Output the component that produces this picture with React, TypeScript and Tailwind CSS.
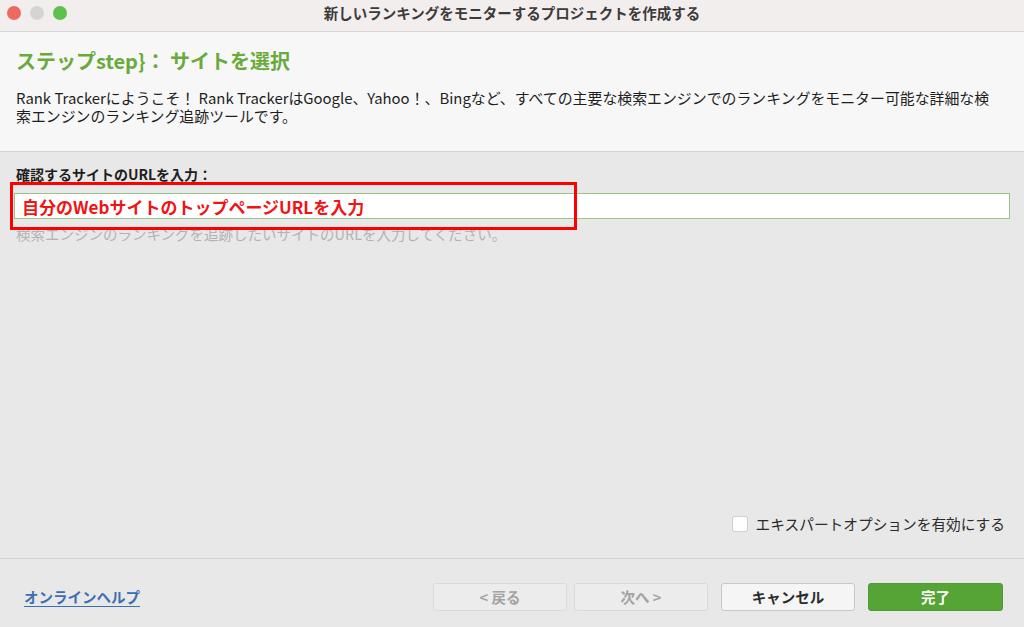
import React from 'react'

const font = { fontFamily: '"Noto Sans CJK JP", "Noto Sans", sans-serif' }

function Btn({ label, kind, w }: { label: string; kind: 'disabled' | 'normal' | 'primary'; w: string }) {
    const cls =
        kind === 'primary'
            ? 'bg-[#56a336] border-[#4f9a31] text-white font-bold'
            : kind === 'normal'
              ? 'bg-[#f5f5f5] border-[#c9c9c9] text-[#2b2b2b] font-bold'
              : 'bg-[#ececec] border-[#dadada] text-[#a3a3a3] font-bold'
    return (
        <button className={`${w} h-[28px] rounded-[3px] border text-[14.5px] leading-none ${cls}`}>
            {label}
        </button>
    )
}

export default function App() {
    return (
        <div className="w-[1024px] h-[627px] flex flex-col bg-[#e8e8e8] overflow-hidden" style={font}>
            {/* title bar */}
            <div className="relative h-[32px] shrink-0 bg-[#f3eeee] border-b border-[#d9d6d6] flex items-center justify-center">
                <div className="absolute left-[7px] top-[6px] flex gap-[9px]">
                    <span className="w-[14px] h-[14px] rounded-full bg-[#ee6a5f]" />
                    <span className="w-[14px] h-[14px] rounded-full bg-[#d6d3d3]" />
                    <span className="w-[14px] h-[14px] rounded-full bg-[#5ec04e]" />
                </div>
                <span className="text-[14.5px] font-bold text-[#3b3b3b] -mt-[5px]">新しいランキングをモニターするプロジェクトを作成する</span>
            </div>

            {/* header */}
            <div className="h-[120px] shrink-0 bg-[#f7f7f7] border-b border-[#d4d4d4] px-[16px] pt-[15px]">
                <h1 className="text-[20px] font-bold text-[#6aaa3c] leading-[28px]">{'ステップstep}： サイトを選択'}</h1>
                <p className="mt-[14px] text-[14.9px] leading-[18px] text-[#1e1e1e] whitespace-nowrap">
                    Rank Trackerにようこそ！ Rank TrackerはGoogle、Yahoo！、Bingなど、すべての主要な検索エンジンでのランキングをモニター可能な詳細な検
                    <br />
                    索エンジンのランキング追跡ツールです。
                </p>
            </div>

            {/* body */}
            <div className="flex-1 flex flex-col px-[14px] pt-[13px] border-b border-[#d2d2d2]">
                <label className="text-[14px] font-bold text-[#1e1e1e] leading-[18px] pl-[2px]">確認するサイトのURLを入力：</label>
                <div className="relative mt-[10px]">
                    <div className="h-[26px] w-[996px] bg-white border border-[#9bc48a]" />
                    <div className="absolute left-[-4px] top-[-11px] w-[567px] h-[48px] border-[3px] border-[#ff0000] flex items-center pl-[9px]">
                        <span className="text-[17px] font-bold text-[#f01414] leading-none">自分のWebサイトのトップページURLを入力</span>
                    </div>
                </div>
                <p className="mt-[6px] text-[14.5px] text-[#b3b3b3] leading-[18px] pl-[2px]">検索エンジンのランキングを追跡したいサイトのURLを入力してください。</p>
                <div className="flex-1" />
                <div className="flex justify-end items-center gap-[8px] pr-[5px] pb-[23px]">
                    <span className="w-[16px] h-[16px] bg-white border border-[#d0d0d0] rounded-[2px]" />
                    <span className="text-[14.7px] text-[#2b2b2b]">エキスパートオプションを有効にする</span>
                </div>
            </div>

            {/* footer */}
            <div className="h-[68px] shrink-0 flex items-center pl-[24px] pr-[21px] pt-[8px]">
                <a className="text-[14.5px] font-bold text-[#3d6fb5] underline underline-offset-[3px]">オンラインヘルプ</a>
                <div className="flex-1" />
                <div className="flex items-center">
                    <Btn label="< 戻る" kind="disabled" w="w-[134px]" />
                    <div className="w-[7px]" />
                    <Btn label="次へ >" kind="disabled" w="w-[134px]" />
                    <div className="w-[13px]" />
                    <Btn label="キャンセル" kind="normal" w="w-[134px]" />
                    <div className="w-[13px]" />
                    <Btn label="完了" kind="primary" w="w-[135px]" />
                </div>
            </div>
        </div>
    )
}
